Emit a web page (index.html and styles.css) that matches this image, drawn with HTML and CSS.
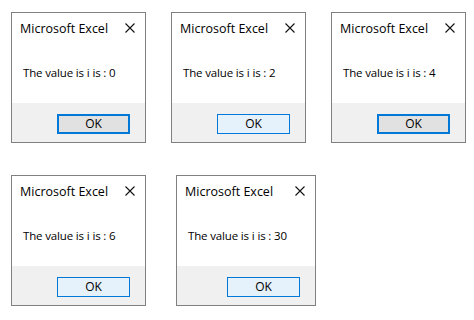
FILE: index.html
```html
<!DOCTYPE html>
<html>
<head>
<meta charset="utf-8">
<link rel="stylesheet" href="styles.css">
</head>
<body>
<div class="page">
  <div class="row row-top">
    <div class="dlg">
      <div class="title"><span>Microsoft Excel</span><svg class="close" viewBox="0 0 10 10"><path d="M0.5 0.5L9.5 9.5M9.5 0.5L0.5 9.5"/></svg></div>
      <div class="msg">The value is i is : 0</div>
      <div class="foot"><button class="btn focus">OK</button></div>
    </div>
    <div class="dlg">
      <div class="title"><span>Microsoft Excel</span><svg class="close" viewBox="0 0 10 10"><path d="M0.5 0.5L9.5 9.5M9.5 0.5L0.5 9.5"/></svg></div>
      <div class="msg">The value is i is : 2</div>
      <div class="foot"><button class="btn hover">OK</button></div>
    </div>
    <div class="dlg">
      <div class="title"><span>Microsoft Excel</span><svg class="close" viewBox="0 0 10 10"><path d="M0.5 0.5L9.5 9.5M9.5 0.5L0.5 9.5"/></svg></div>
      <div class="msg">The value is i is : 4</div>
      <div class="foot"><button class="btn focus">OK</button></div>
    </div>
  </div>
  <div class="row row-bottom">
    <div class="dlg">
      <div class="title"><span>Microsoft Excel</span><svg class="close" viewBox="0 0 10 10"><path d="M0.5 0.5L9.5 9.5M9.5 0.5L0.5 9.5"/></svg></div>
      <div class="msg">The value is i is : 6</div>
      <div class="foot"><button class="btn hover">OK</button></div>
    </div>
    <div class="dlg wide">
      <div class="title"><span>Microsoft Excel</span><svg class="close" viewBox="0 0 10 10"><path d="M0.5 0.5L9.5 9.5M9.5 0.5L0.5 9.5"/></svg></div>
      <div class="msg">The value is i is : 30</div>
      <div class="foot"><button class="btn hover">OK</button></div>
    </div>
  </div>
</div>
</body>
</html>
```
FILE: styles.css
```css
html, body {
  margin: 0;
  padding: 0;
  background: #fff;
}
.page {
  padding: 12px 0 0 11px;
  display: flex;
  flex-direction: column;
  gap: 32px;
  font-family: "Open Sans", "Noto Sans", sans-serif;
  font-size: 12px;
  color: #000;
}
.row {
  display: flex;
}
.row-top { gap: 25px; }
.row-bottom { gap: 30px; }
.dlg {
  width: 133px;
  height: 129px;
  border: 1px solid #808080;
  display: flex;
  flex-direction: column;
  background: #fff;
}
.dlg.wide { width: 138px; }
.title {
  height: 30px;
  display: flex;
  align-items: center;
  justify-content: space-between;
  padding: 0 10px 0 8px;
  font-size: 12.5px;
}
.close {
  width: 10px;
  height: 10px;
  fill: none;
  stroke: #111;
  stroke-width: 1.1;
}
.msg {
  height: 60px;
  padding-left: 11px;
  display: flex;
  align-items: center;
  padding-bottom: 2px;
  box-sizing: border-box;
  font-size: 11.5px;
  letter-spacing: -0.15px;
}
.foot {
  flex: 1;
  background: #f0f0f0;
  display: flex;
  justify-content: flex-end;
  align-items: flex-start;
  padding: 11px 15px 0 0;
}
.btn {
  width: 73px;
  height: 20px;
  box-sizing: border-box;
  font: inherit;
  font-size: 12px;
  color: #000;
  padding: 0;
  line-height: 16px;
}
.btn.focus {
  background: #e1e1e1;
  border: 2px solid #0078d7;
}
.btn.hover {
  background: #e5f1fb;
  border: 1px solid #0078d7;
}
```
